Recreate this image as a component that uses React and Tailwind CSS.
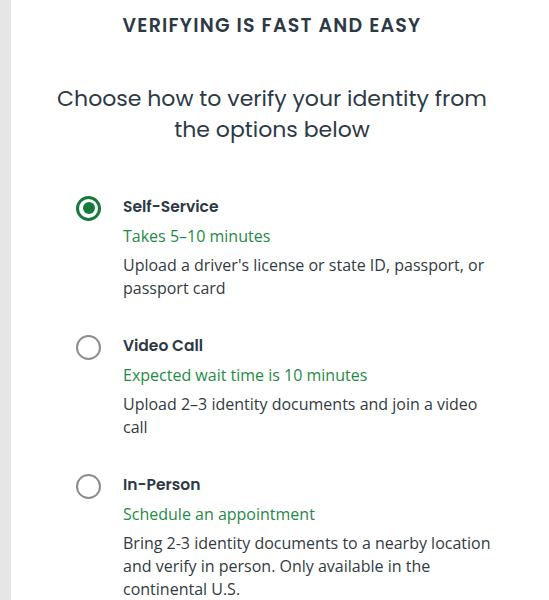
const options = [
  {
    id: "self",
    title: "Self-Service",
    time: "Takes 5–10 minutes",
    desc: "Upload a driver's license or state ID, passport, or passport card",
  },
  {
    id: "video",
    title: "Video Call",
    time: "Expected wait time is 10 minutes",
    desc: "Upload 2–3 identity documents and join a video call",
  },
  {
    id: "person",
    title: "In-Person",
    time: "Schedule an appointment",
    desc: "Bring 2-3 identity documents to a nearby location and verify in person. Only available in the continental U.S.",
  },
];

function Radio({ checked }) {
  if (checked) {
    return (
      <span className="flex h-[25px] w-[25px] shrink-0 items-center justify-center rounded-full border-[3px] border-[#157a3c]">
        <span className="block h-[12px] w-[12px] rounded-full bg-[#157a3c]" />
      </span>
    );
  }
  return <span className="block h-[25px] w-[25px] shrink-0 rounded-full border-2 border-[#8c8c8c]" />;
}

export default function App() {
  const selected = "self";
  return (
    <div className="flex min-h-[600px] bg-white">
      <div className="w-[11px] shrink-0 bg-[#e6e6e6]" />
      <div className="flex-1 pr-[16px]">
        <h2 className="pt-[12px] text-center font-['Poppins','Inter',sans-serif] text-[19px] font-semibold tracking-[0.065em] text-[#2d3a46]">
          VERIFYING IS FAST AND EASY
        </h2>
        <h1 className="mt-[42px] px-[40px] text-center font-['Poppins','Inter',sans-serif] text-[22px] leading-[31px] text-[#2d3a46]">
          Choose how to verify your identity from the options below
        </h1>
        <div className="mt-[50px] flex flex-col gap-[34px] pl-[65px]">
          {options.map((o) => (
            <div key={o.id} className="flex gap-[22px]">
              <div className="pt-[1px]">
                <Radio checked={o.id === selected} />
              </div>
              <div className="w-[375px] font-['Open_Sans',sans-serif]">
                <div className="font-['Poppins','Inter',sans-serif] text-[15.5px] font-semibold leading-[24px] text-[#2d3a46]">
                  {o.title}
                </div>
                <div className="mt-[5px] text-[16px] leading-[24px] text-[#1f8a45]">{o.time}</div>
                <p className="mt-[6px] text-[16px] leading-[23px] text-[#333b42]">{o.desc}</p>
              </div>
            </div>
          ))}
        </div>
      </div>
    </div>
  );
}
